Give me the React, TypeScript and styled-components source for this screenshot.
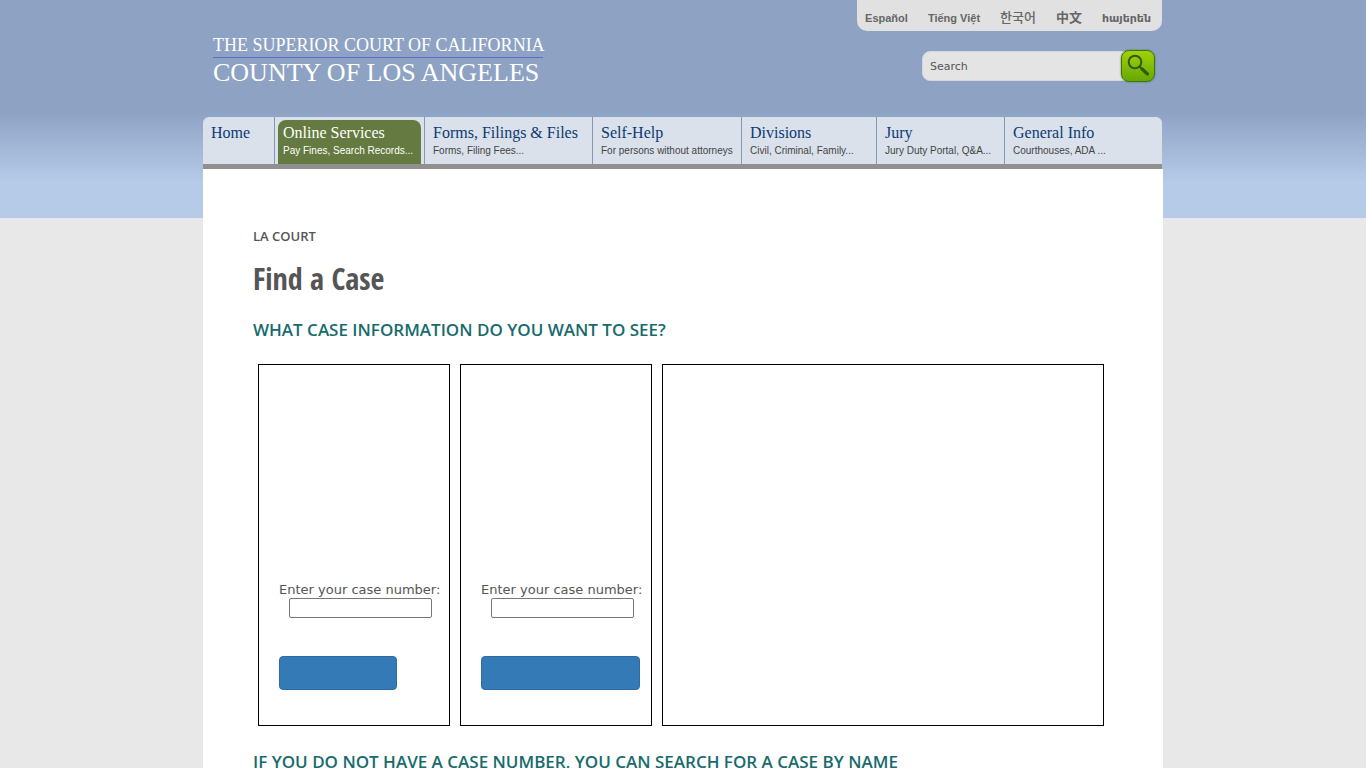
import React from "react";
import styled, { createGlobalStyle } from "styled-components";

const GlobalStyle = createGlobalStyle`
  *, *::before, *::after { box-sizing: border-box; }
  body {
    margin: 0;
    background: #e8e8e8;
    color: #555;
    font: 13px/18px "DejaVu Sans", sans-serif;
    overflow-x: hidden;
  }
  a { color: inherit; text-decoration: none; }
`;

const Page = styled.div`
  min-height: 100vh;
  background: linear-gradient(#8ea2c4 0, #8ea2c4 112px, #b6cbe7 182px, #b6cbe7 218px) top / 100% 218px no-repeat;
`;

const Container = styled.div`
  width: 100%;
  max-width: 960px;
  margin: 0 auto;
`;

const Header = styled.header`
  display: flex;
  justify-content: space-between;
  height: 117px;
  padding: 0 1px 0 10px;
`;

const Logo = styled.a`
  display: flex;
  flex-direction: column;
  width: 330px;
  margin-top: 34px;
  color: #fff;
  font-family: "Liberation Serif", serif;
  white-space: nowrap;
`;

const LogoTop = styled.span`
  padding-bottom: 1px;
  font-size: 18px;
  line-height: 22px;
  border-bottom: 1px solid #5f6cd0;
`;

const LogoBottom = styled.span`
  font-size: 26px;
  line-height: 30px;
`;

const HeaderTools = styled.div`
  display: flex;
  flex-direction: column;
  align-items: flex-end;
`;

const Languages = styled.nav`
  display: flex;
  gap: 20px;
  height: 31px;
  padding: 0 11px 0 8px;
  background: #e1e1e1;
  border-radius: 0 0 10px 10px;
  color: #666;
  font: bold 11px/36px "Liberation Sans", "Noto Sans CJK KR", "DejaVu Sans", sans-serif;
`;

const Language = styled.a<{ $large?: boolean; $light?: boolean }>`
  font-size: ${(p) => (p.$large ? 13 : 11)}px;
  font-weight: ${(p) => (p.$light ? 500 : 700)};
`;

const SearchForm = styled.form`
  display: flex;
  align-items: center;
  margin: 19px 7px 0 0;
`;

const SearchInput = styled.input`
  width: 204px;
  height: 30px;
  margin-right: -5px;
  padding: 0 7px;
  border: 1px solid #d3d7df;
  border-radius: 8px 0 0 8px;
  background: #e4e4e4;
  color: #555;
  font: 11px "DejaVu Sans", sans-serif;
  &::placeholder { color: #555; opacity: 1; }
`;

const SearchButton = styled.button`
  display: flex;
  width: 34px;
  height: 32px;
  padding: 0;
  border: 1px solid #3f7406;
  border-radius: 8px;
  background: linear-gradient(#a0d20a, #67a703);
  align-items: center;
  justify-content: center;
  box-shadow: 0 0 2px #4f7a3a;
`;

const MainNav = styled.nav`
  display: grid;
  grid-template-columns: 71fr 150fr 168fr 149fr 135fr 128fr 158fr;
  height: 52px;
  margin-right: 1px;
  border-bottom: 5px solid #909090;
  border-radius: 6px 6px 0 0;
  background: #dae1eb;
`;

const NavItem = styled.a<{ $active?: boolean }>`
  min-width: 0;
  padding: ${(p) => (p.$active ? "3px 3px 0" : "3px 8px 0")};
  border-left: 1px solid #8597b4;
  color: ${(p) => (p.$active ? "#fff" : "#0c3a75")};
  white-space: nowrap;
  &:first-child { border-left: 0; }
`;

const NavLabel = styled.span<{ $active?: boolean }>`
  display: block;
  height: 44px;
  padding: ${(p) => (p.$active ? "3px 5px 0" : "3px 0 0")};
  background: ${(p) => (p.$active ? "#647a40" : "transparent")};
  border-radius: 8px 8px 0 0;
`;

const NavTitle = styled.span`
  display: block;
  font: 16px/20px "Liberation Serif", serif;
`;

const NavNote = styled.span<{ $active?: boolean }>`
  display: block;
  color: ${(p) => (p.$active ? "#fff" : "#444")};
  font: 10px/15px "Liberation Sans", sans-serif;
`;

const Main = styled.main`
  min-height: calc(100vh - 169px);
  padding: 58px 50px 24px;
  background: #fff;
`;

const Breadcrumb = styled.p`
  margin: 0;
  font: 600 13px/18px "Open Sans", sans-serif;
`;

const PageTitle = styled.h1`
  margin: 14px 0 20px;
  color: #555;
  font: 700 30px/40px "Open Sans Condensed", "Open Sans", sans-serif;
`;

const SectionTitle = styled.h2`
  margin: 0;
  color: #176b6d;
  font: 600 17px/22px "Open Sans", sans-serif;
`;

const Cards = styled.div`
  display: grid;
  grid-template-columns: 192fr 192fr 442fr;
  gap: 10px;
  margin: 23px 9px 25px 5px;
`;

const Card = styled.form`
  min-width: 0;
  min-height: 362px;
  padding: 216px 0 35px 20px;
  border: 1px solid #000;
`;

const CardLabel = styled.label`
  display: block;
  color: #555;
  white-space: nowrap;
  line-height: 17px;
`;

const CaseInput = styled.input`
  display: block;
  width: 143px;
  height: 20px;
  margin: 0 0 38px 10px;
  border: 1px solid #767676;
  border-radius: 2px;
  background: #fff;
`;

const SubmitButton = styled.button<{ $wide?: boolean }>`
  display: block;
  width: ${(p) => (p.$wide ? 159 : 118)}px;
  height: 34px;
  border: 1px solid #2e6da4;
  border-radius: 4px;
  background: #337ab7;
`;

const languages = [
  { name: "Español" },
  { name: "Tiếng Việt" },
  { name: "한국어", large: true, light: true },
  { name: "中文", large: true },
  { name: "հայերեն" },
];

const navItems = [
  { title: "Home", note: "" },
  { title: "Online Services", note: "Pay Fines, Search Records...", active: true },
  { title: "Forms, Filings & Files", note: "Forms, Filing Fees..." },
  { title: "Self-Help", note: "For persons without attorneys" },
  { title: "Divisions", note: "Civil, Criminal, Family..." },
  { title: "Jury", note: "Jury Duty Portal, Q&A..." },
  { title: "General Info", note: "Courthouses, ADA ..." },
];

export default function App() {
  return (
    <Page>
      <GlobalStyle />
      <Container>
        <Header>
          <Logo href="#">
            <LogoTop>THE SUPERIOR COURT OF CALIFORNIA</LogoTop>
            <LogoBottom>COUNTY OF LOS ANGELES</LogoBottom>
          </Logo>
          <HeaderTools>
            <Languages aria-label="Languages">
              {languages.map((l) => (
                <Language key={l.name} href="#" $large={l.large} $light={l.light}>{l.name}</Language>
              ))}
            </Languages>
            <SearchForm>
              <SearchInput type="text" aria-label="Search" placeholder="Search" />
              <SearchButton type="button" aria-label="Search">
                <svg width="27" height="27" viewBox="0 0 27 27" fill="none" stroke="#2f5a08">
                  <circle cx="10" cy="9" r="6.3" strokeWidth="2" />
                  <path d="M14.6 13.6 17 16" strokeWidth="2" />
                  <path d="M17 16 22.5 21" strokeWidth="3.2" strokeLinecap="round" />
                </svg>
              </SearchButton>
            </SearchForm>
          </HeaderTools>
        </Header>
        <MainNav aria-label="Main">
          {navItems.map((n) => (
            <NavItem key={n.title} href="#" $active={n.active}>
              <NavLabel $active={n.active}>
                <NavTitle>{n.title}</NavTitle>
                <NavNote $active={n.active}>{n.note}</NavNote>
              </NavLabel>
            </NavItem>
          ))}
        </MainNav>
        <Main>
          <Breadcrumb>LA COURT</Breadcrumb>
          <PageTitle>Find a Case</PageTitle>
          <SectionTitle>WHAT CASE INFORMATION DO YOU WANT TO SEE?</SectionTitle>
          <Cards>
            <Card>
              <CardLabel htmlFor="case-a">Enter your case number:</CardLabel>
              <CaseInput id="case-a" type="text" />
              <SubmitButton type="button" aria-label="Submit" />
            </Card>
            <Card>
              <CardLabel htmlFor="case-b">Enter your case number:</CardLabel>
              <CaseInput id="case-b" type="text" />
              <SubmitButton type="button" aria-label="Submit" $wide />
            </Card>
            <Card as="div" />
          </Cards>
          <SectionTitle>IF YOU DO NOT HAVE A CASE NUMBER, YOU CAN SEARCH FOR A CASE BY NAME</SectionTitle>
        </Main>
      </Container>
    </Page>
  );
}
